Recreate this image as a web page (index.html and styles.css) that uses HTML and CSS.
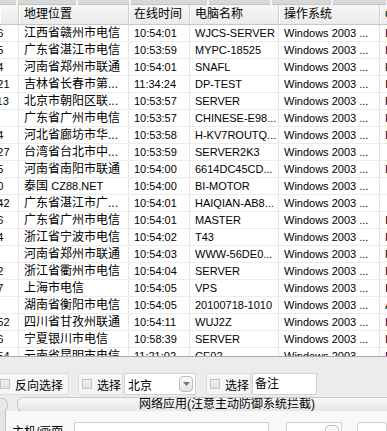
FILE: index.html
```html
<!DOCTYPE html>
<html lang="zh-CN">
<head>
    <meta charset="UTF-8">
    <title>在线主机列表</title>
    <link rel="stylesheet" href="styles.css">
</head>
<body>
    <div class="topstrip">
        <span style="width:16px"></span>
        <span style="width:58px"></span>
        <span style="width:51px"></span>
        <span style="width:76px"></span>
        <span style="width:61px"></span>
        <span style="width:59px"></span>
        <span style="width:53px"></span>
        <span style="width:20px"></span>
    </div>

    <div class="grid">
        <div class="row head">
            <div class="c id"></div>
            <div class="c">地理位置</div>
            <div class="c">在线时间</div>
            <div class="c">电脑名称</div>
            <div class="c">操作系统</div>
            <div class="c lat">CPU</div>
        </div>
        <div id="rows"></div>
    </div>

    <div class="band"></div>

    <div class="tools">
        <label class="grp first"><span class="chk"></span>反向选择</label>
        <label class="grp second"><span class="chk"></span>选择</label>
        <div class="combo">北京<span class="drop"><svg width="7" height="4" viewBox="0 0 7 4"><path d="M0 0h7L3.5 4z" fill="#777"/></svg></span></div>
        <label class="grp third"><span class="chk"></span>选择</label>
        <div class="field">备注</div>
    </div>

    <div class="tabs">
        <span class="tab-end"></span>
        <div class="tab-head">网络应用(注意主动防御系统拦截)</div>
    </div>

    <div class="lower">
        <div class="side"></div>
        <div class="pane">
            <span class="lbl">主机/画面</span>
            <span class="box wide"></span>
            <span class="box sel"><span class="drop"></span></span>
            <span class="box btn"></span>
        </div>
    </div>

    <script>
        // 在线主机数据
        const hosts = [
            ['8186', '江西省赣州市电信', '10:54:01', 'WJCS-SERVER', 'I'],
            ['8175', '广东省湛江市电信', '10:53:59', 'MYPC-18525', 'I'],
            ['8164', '河南省郑州市联通', '10:54:01', 'SNAFL', 'F'],
            ['12121', '吉林省长春市第...', '11:34:24', 'DP-TEST', 'I'],
            ['10113', '北京市朝阳区联...', '10:53:57', 'SERVER', 'F'],
            ['816', '广东省广州市电信', '10:53:57', 'CHINESE-E98...', 'I'],
            ['8144', '河北省廊坊市华...', '10:53:58', 'H-KV7ROUTQ...', 'I'],
            ['12127', '台湾省台北市中...', '10:53:59', 'SERVER2K3', ''],
            ['8135', '河南省南阳市联通', '10:54:00', '6614DC45CD...', 'I'],
            ['8120', '泰国 <span class="lat">CZ88.NET</span>', '10:54:00', 'BI-MOTOR', ''],
            ['10142', '广东省湛江市广...', '10:54:01', 'HAIQIAN-AB8...', ''],
            ['8106', '广东省广州市电信', '10:54:01', 'MASTER', 'I'],
            ['8094', '浙江省宁波市电信', '10:54:02', 'T43', 'I'],
            ['809', '河南省郑州市联通', '10:54:03', 'WWW-56DE0...', 'F'],
            ['8082', '浙江省衢州市电信', '10:54:04', 'SERVER', 'I'],
            ['8077', '上海市电信', '10:54:05', 'VPS', 'I'],
            ['806', '湖南省衡阳市电信', '10:54:05', '20100718-1010', 'A'],
            ['10152', '四川省甘孜州联通', '10:54:11', 'WUJ2Z', 'I'],
            ['8046', '宁夏银川市电信', '10:58:39', 'SERVER', 'I'],
            ['12154', '云南省昆明市电信', '11:21:02', 'CE02', 'I']
        ];

        const rows = document.getElementById('rows');
        hosts.forEach(function (h) {
            const row = document.createElement('div');
            row.className = 'row';
            row.innerHTML =
                '<div class="c id lat"><span>' + h[0] + '</span></div>' +
                '<div class="c">' + h[1] + '</div>' +
                '<div class="c lat">' + h[2] + '</div>' +
                '<div class="c lat">' + h[3] + '</div>' +
                '<div class="c lat">Windows 2003 ...</div>' +
                '<div class="c lat">' + h[4] + '</div>';
            rows.appendChild(row);
        });
    </script>
</body>
</html>
```

FILE: styles.css
```css
body {
    margin: 0;
    width: 387px;
    height: 431px;
    overflow: hidden;
    background: #ececec;
    font-family: "Liberation Sans", "Noto Sans CJK SC", sans-serif;
    font-size: 12px;
    color: #000;
}
.lat {
    font-family: "Liberation Sans", sans-serif;
    font-size: 11px;
}

/* 顶部按钮边缘 */
.topstrip {
    display: flex;
    gap: 2px;
    height: 5px;
    background: #f4f4f4;
    overflow: hidden;
}
.topstrip span {
    flex: none;
    height: 4px;
    background: #d8d8d8;
    border-bottom: 1px solid #c4c4c4;
}

/* 列表 */
.grid {
    height: 351px;
    overflow: hidden;
    background: #fff;
    border-bottom: 1px solid #a8a8a8;
}
.row {
    display: grid;
    grid-template-columns: 19px 110px 61px 89px 101px 40px;
    height: 17px;
    box-sizing: border-box;
    border-bottom: 1px solid #ececec;
}
.row.head {
    height: 20px;
    background: linear-gradient(#f7f7f7, #ebebeb);
    border-bottom: 1px solid #c8c8c8;
}
.c {
    padding-left: 5px;
    border-right: 1px solid #e4e4e4;
    white-space: nowrap;
    overflow: hidden;
    line-height: 16px;
}
.head .c {
    line-height: 19px;
    border-right: 1px solid #cfcfcf;
    box-shadow: inset 1px 0 #fff;
}
.c.id {
    padding-left: 0;
}
.c.id span {
    display: block;
    margin-left: -21px;
}

/* 工具条 */
.band {
    height: 15px;
    background: #ececec;
}
.tools {
    display: flex;
    align-items: center;
    height: 24px;
}
.grp {
    flex: none;
    display: flex;
    align-items: center;
    gap: 5px;
    height: 22px;
    box-sizing: border-box;
    white-space: nowrap;
    background: #f6f6f6;
    border: 1px solid #dcdcdc;
    border-radius: 2px;
}
.grp.first {
    margin-left: -4px;
    padding: 0 5px 0 3px;
}
.grp.second {
    margin-left: 9px;
    padding: 0 1px 0 3px;
}
.grp.third {
    margin-left: 10px;
    padding: 0 1px 0 3px;
}
.chk {
    flex: none;
    width: 8px;
    height: 8px;
    border: 1px solid #c3c3c3;
    background: linear-gradient(#f0f0f0, #e2e2e2);
}
.combo {
    flex: none;
    display: flex;
    align-items: center;
    justify-content: space-between;
    width: 72px;
    height: 22px;
    box-sizing: border-box;
    margin-left: 1px;
    padding: 0 2px 0 3px;
    background: #fff;
    border: 1px solid #d0d0d0;
}
.drop {
    display: flex;
    align-items: center;
    justify-content: center;
    width: 12px;
    height: 14px;
    border: 1px solid #bdbdbd;
    border-radius: 4px;
    background: linear-gradient(#fafafa, #e4e4e4);
}
.field {
    flex: none;
    width: 65px;
    height: 22px;
    box-sizing: border-box;
    margin-left: 1px;
    padding-left: 2px;
    line-height: 20px;
    background: #fff;
    border: 1px solid #d0d0d0;
}

/* 选项卡 */
.tabs {
    display: flex;
    align-items: center;
    height: 13px;
    margin-top: 2px;
}
.tab-end {
    width: 8px;
    height: 12px;
    margin-left: -1px;
    border: 1px solid #c8c8c8;
    border-left: none;
    border-radius: 0 6px 6px 0;
    background: #e8e8e8;
}
.tab-head {
    flex: 1;
    height: 13px;
    margin-left: 9px;
    padding-left: 121px;
    line-height: 13px;
    white-space: nowrap;
    overflow: hidden;
    border: 1px solid #c8c8c8;
    border-right: none;
    border-radius: 6px 0 0 6px;
    background: linear-gradient(#f8f8f8, #e6e6e6);
}

.lower {
    display: flex;
    height: 30px;
}
.side {
    width: 13px;
    border-right: 1px solid #c4c4c4;
    background: #e4e4e4;
}
.pane {
    flex: 1;
    display: flex;
    align-items: flex-start;
    padding-top: 11px;
    background: #f8f8f8;
}
.lbl {
    margin-left: 6px;
    width: 62px;
}
.box {
    height: 20px;
    box-sizing: border-box;
    background: #fff;
    border: 1px solid #cfcfcf;
}
.box.wide {
    width: 195px;
}
.box.sel {
    width: 56px;
    margin-left: 17px;
    display: flex;
    justify-content: flex-end;
    padding: 2px;
}
.box.btn {
    width: 30px;
    margin-left: 15px;
    border-radius: 3px;
}
```
